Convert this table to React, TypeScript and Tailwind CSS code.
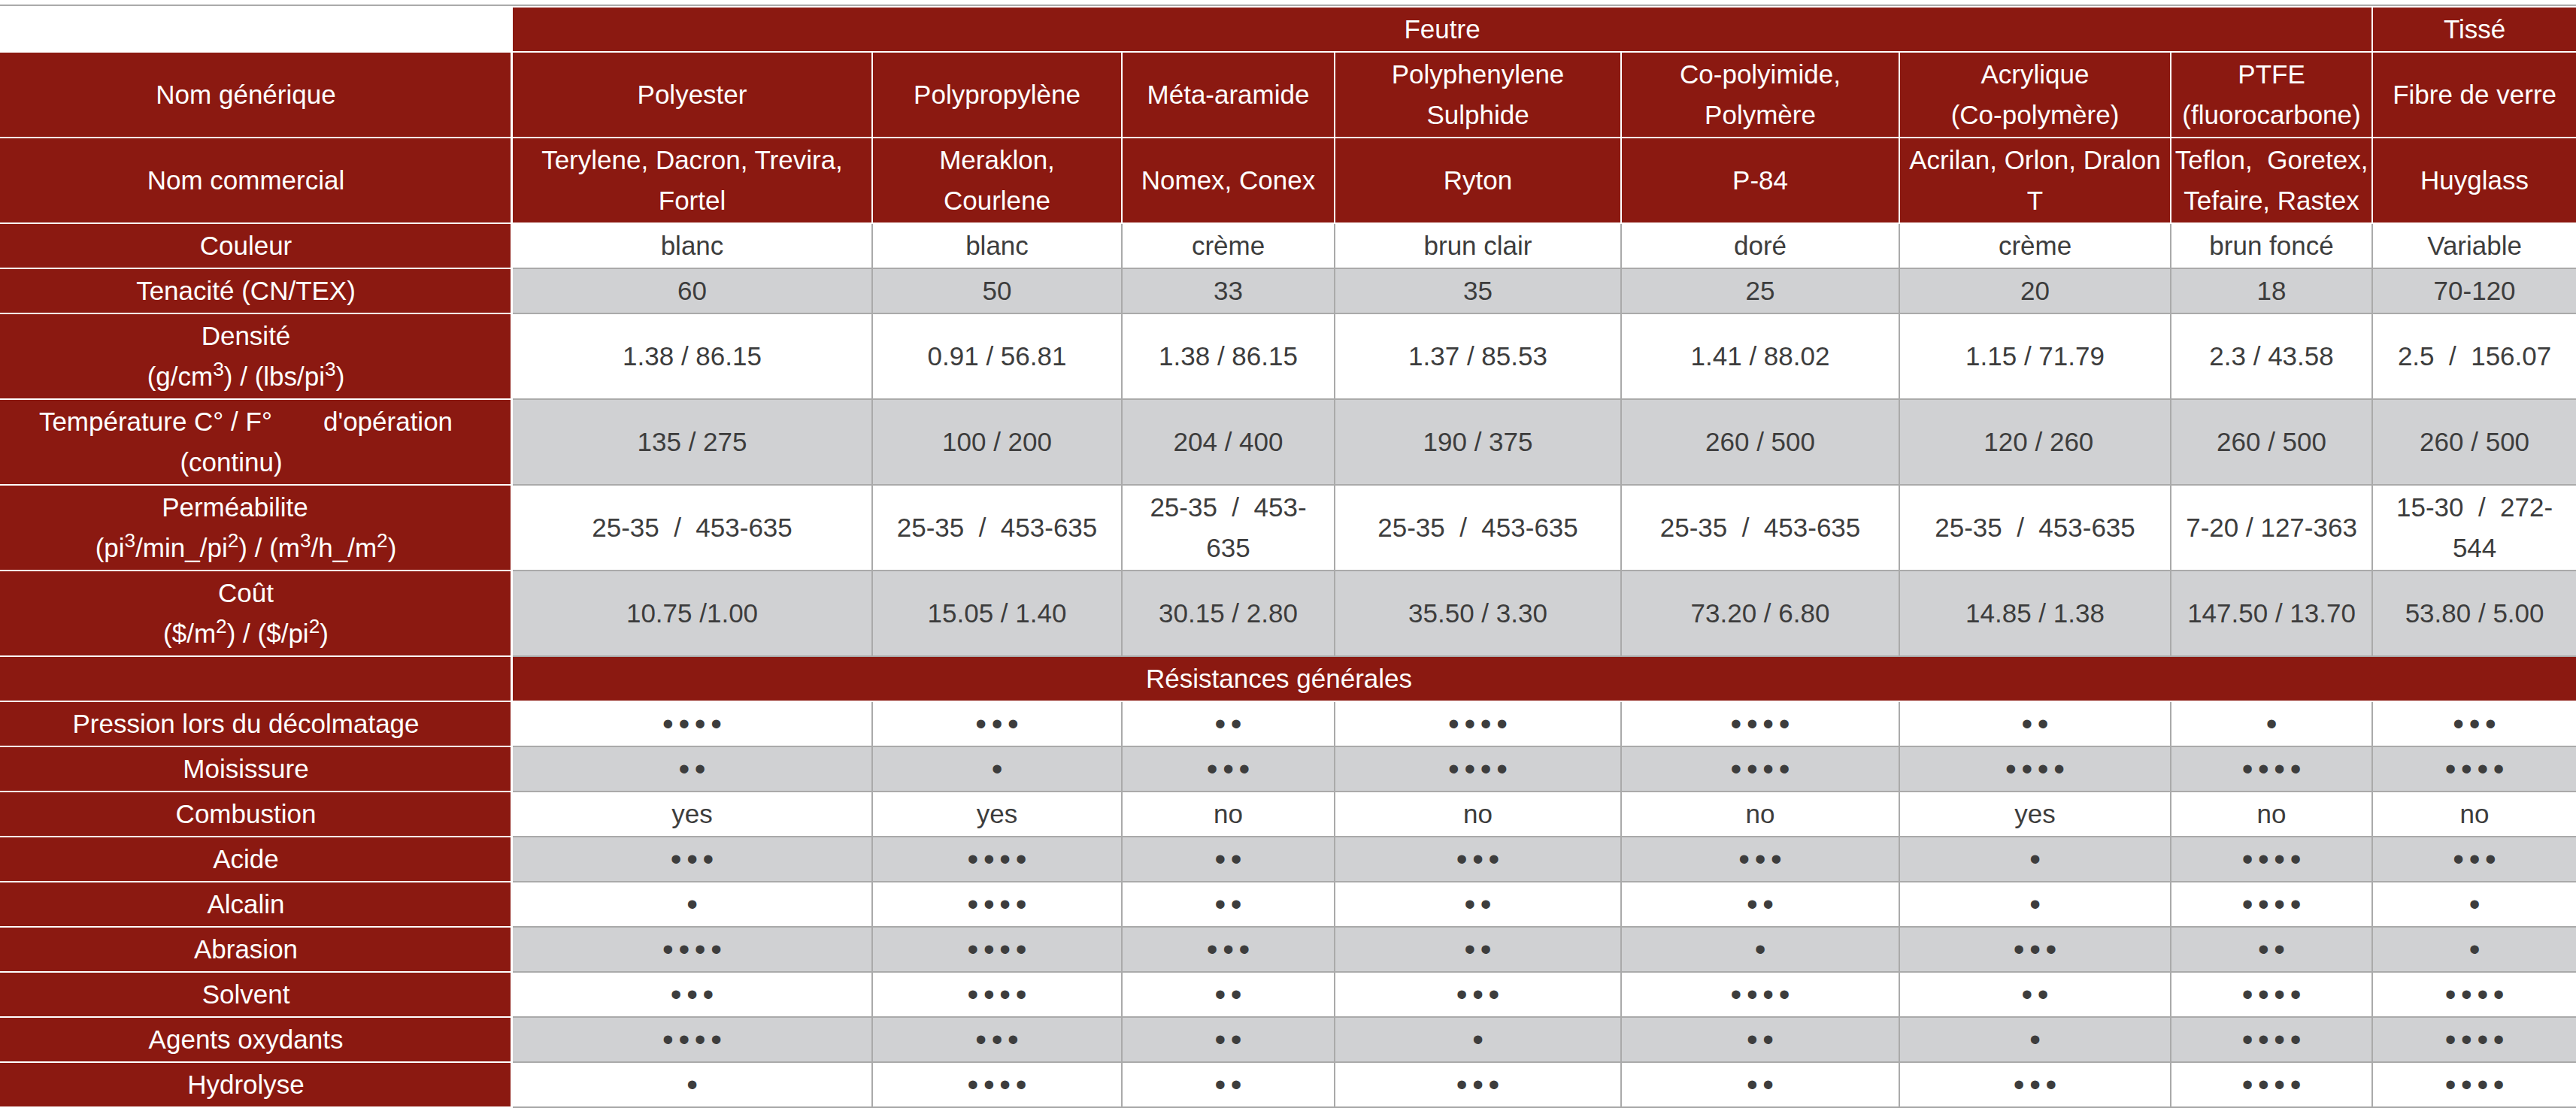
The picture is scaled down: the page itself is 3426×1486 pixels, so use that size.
import type { ReactNode } from 'react';

const colWidths = [
  'w-[682px]',
  'w-[479px]',
  'w-[332px]',
  'w-[283px]',
  'w-[381px]',
  'w-[370px]',
  'w-[361px]',
  'w-[268px]',
  'w-[270px]',
];

const nb = '\u00a0';

function Dots({ n }: { n: number }) {
  return (
    <span className="text-[42px] leading-[0] align-[-2px] [word-spacing:-5px]">
      {Array(n).fill('•').join(' ')}
    </span>
  );
}

const dots = (n: number) => <Dots n={n} />;

type Row = {
  label: ReactNode;
  values: ReactNode[];
  shade: boolean;
};

const headerRows: { label: ReactNode; values: ReactNode[] }[] = [
  {
    label: 'Nom générique',
    values: [
      'Polyester',
      'Polypropylène',
      'Méta-aramide',
      <>Polyphenylene<br />Sulphide</>,
      <>Co-polyimide,<br />Polymère</>,
      <>Acrylique<br />(Co-polymère)</>,
      <>PTFE<br />(fluorocarbone)</>,
      'Fibre de verre',
    ],
  },
  {
    label: 'Nom commercial',
    values: [
      <>Terylene, Dacron, Trevira,<br />Fortel</>,
      <>Meraklon,<br />Courlene</>,
      'Nomex, Conex',
      'Ryton',
      'P-84',
      <>Acrilan, Orlon, Dralon<br />T</>,
      <>Teflon,{nb} Goretex,<br />Tefaire, Rastex</>,
      'Huyglass',
    ],
  },
];

const propertyRows: Row[] = [
  {
    label: 'Couleur',
    values: ['blanc', 'blanc', 'crème', 'brun clair', 'doré', 'crème', 'brun foncé', 'Variable'],
    shade: false,
  },
  {
    label: 'Tenacité (CN/TEX)',
    values: ['60', '50', '33', '35', '25', '20', '18', '70-120'],
    shade: true,
  },
  {
    label: (
      <>
        Densité
        <br />
        (g/cm<sup>3</sup>) / (lbs/pi<sup>3</sup>)
      </>
    ),
    values: [
      '1.38 / 86.15',
      '0.91 / 56.81',
      '1.38 / 86.15',
      '1.37 / 85.53',
      '1.41 / 88.02',
      '1.15 / 71.79',
      '2.3 / 43.58',
      `2.5 ${nb}/ ${nb}156.07`,
    ],
    shade: false,
  },
  {
    label: (
      <>
        {`Température C° / F°${nb.repeat(7)}d'opération`}
        <br />
        {`(continu)${nb.repeat(4)}`}
      </>
    ),
    values: ['135 / 275', '100 / 200', '204 / 400', '190 / 375', '260 / 500', `${nb}120 / 260`, '260 / 500', '260 / 500'],
    shade: true,
  },
  {
    label: (
      <>
        {`Perméabilite${nb.repeat(3)}`}
        <br />
        (pi<sup>3</sup>/min_/pi<sup>2</sup>) / (m<sup>3</sup>/h_/m<sup>2</sup>)
      </>
    ),
    values: [
      `25-35 ${nb}/ ${nb}453-635`,
      `25-35 ${nb}/ ${nb}453-635`,
      <>{`25-35 ${nb}/ ${nb}453-`}<br />635</>,
      `25-35 ${nb}/ ${nb}453-635`,
      `25-35 ${nb}/ ${nb}453-635`,
      `25-35 ${nb}/ ${nb}453-635`,
      '7-20 / 127-363',
      <>{`15-30 ${nb}/ ${nb}272-`}<br />544</>,
    ],
    shade: false,
  },
  {
    label: (
      <>
        Coût
        <br />
        ($/m<sup>2</sup>) / ($/pi<sup>2</sup>)
      </>
    ),
    values: ['10.75 /1.00', '15.05 / 1.40', '30.15 / 2.80', '35.50 / 3.30', '73.20 / 6.80', '14.85 / 1.38', '147.50 / 13.70', '53.80 / 5.00'],
    shade: true,
  },
];

const resistanceRows: Row[] = [
  { label: 'Pression lors du décolmatage', values: [4, 3, 2, 4, 4, 2, 1, 3].map(dots), shade: false },
  { label: 'Moisissure', values: [2, 1, 3, 4, 4, 4, 4, 4].map(dots), shade: true },
  { label: 'Combustion', values: ['yes', 'yes', 'no', 'no', 'no', 'yes', 'no', 'no'], shade: false },
  { label: 'Acide', values: [3, 4, 2, 3, 3, 1, 4, 3].map(dots), shade: true },
  { label: 'Alcalin', values: [1, 4, 2, 2, 2, 1, 4, 1].map(dots), shade: false },
  { label: 'Abrasion', values: [4, 4, 3, 2, 1, 3, 2, 1].map(dots), shade: true },
  { label: 'Solvent', values: [3, 4, 2, 3, 4, 2, 4, 4].map(dots), shade: false },
  { label: 'Agents oxydants', values: [4, 3, 2, 1, 2, 1, 4, 4].map(dots), shade: true },
  { label: 'Hydrolyse', values: [1, 4, 2, 3, 2, 3, 4, 4].map(dots), shade: false },
];

const labelCell =
  'bg-[#8b1911] text-white font-normal border-b-2 border-r-[3px] border-white pl-[2px] pr-[27px] py-[2px] text-center whitespace-nowrap';

function headCell(last: boolean) {
  return `bg-[#8b1911] text-white font-normal border-b-2 border-white px-[2px] py-[2px] text-center whitespace-nowrap ${
    last ? '' : 'border-r-2'
  }`;
}

function dataCell(shade: boolean, last: boolean) {
  return `${shade ? 'bg-[#d0d1d3]' : 'bg-white'} text-[#3d3d3d] border-b-2 border-[#aaaaaa] px-[2px] py-[2px] text-center whitespace-nowrap ${
    last ? '' : 'border-r-2'
  }`;
}

function DataRow({ row }: { row: Row }) {
  return (
    <tr>
      <th className={labelCell}>{row.label}</th>
      {row.values.map((v, i) => (
        <td key={i} className={dataCell(row.shade, i === row.values.length - 1)}>
          {v}
        </td>
      ))}
    </tr>
  );
}

export default function App() {
  return (
    <div className="min-h-screen bg-white pt-[6px] font-['Liberation_Sans',Arial,sans-serif] text-[35px] leading-[54px]">
      <div className="border-t-2 border-[#aaaaaa] pt-[2px]">
        <table className="w-[3426px] table-fixed border-separate border-spacing-0">
          <colgroup>
            {colWidths.map((w, i) => (
              <col key={i} className={w} />
            ))}
          </colgroup>
          <thead>
            {/* Family row */}
            <tr>
              <th className="bg-white border-b-2 border-r-[3px] border-white py-[2px]" />
              <th colSpan={7} className={headCell(false)}>
                Feutre
              </th>
              <th className={headCell(true)}>Tissé</th>
            </tr>
            {headerRows.map((row, r) => (
              <tr key={r}>
                <th className={labelCell}>{row.label}</th>
                {row.values.map((v, i) => (
                  <th key={i} className={headCell(i === row.values.length - 1)}>
                    {v}
                  </th>
                ))}
              </tr>
            ))}
          </thead>
          <tbody>
            {propertyRows.map((row, r) => (
              <DataRow key={r} row={row} />
            ))}
            {/* Section row */}
            <tr>
              <th className={labelCell} />
              <th
                colSpan={8}
                className="bg-[#8b1911] text-white font-normal border-b-2 border-white pl-[2px] pr-[708px] py-[2px] text-center whitespace-nowrap"
              >
                Résistances générales
              </th>
            </tr>
            {resistanceRows.map((row, r) => (
              <DataRow key={r} row={row} />
            ))}
          </tbody>
        </table>
      </div>
    </div>
  );
}
